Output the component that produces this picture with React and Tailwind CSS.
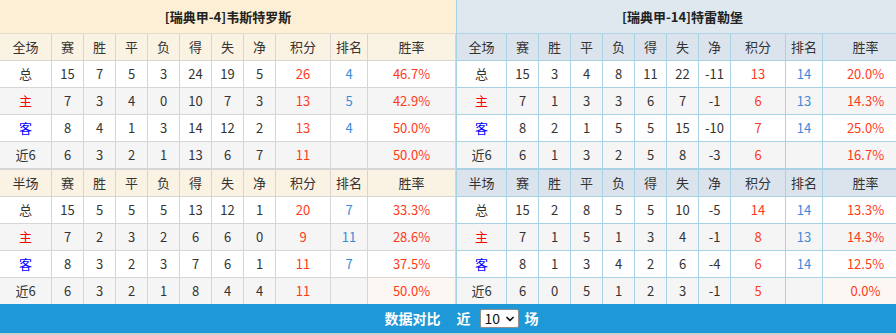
import { ChevronDown } from 'lucide-react';

const HEAD = ['赛', '胜', '平', '负', '得', '失', '净', '积分', '排名', '胜率'];

const home = {
  title: '[瑞典甲-4]韦斯特罗斯',
  full: [
    ['总', 15, 7, 5, 3, 24, 19, 5, 26, 4, '46.7%'],
    ['主', 7, 3, 4, 0, 10, 7, 3, 13, 5, '42.9%'],
    ['客', 8, 4, 1, 3, 14, 12, 2, 13, 4, '50.0%'],
    ['近6', 6, 3, 2, 1, 13, 6, 7, 11, '', '50.0%'],
  ],
  half: [
    ['总', 15, 5, 5, 5, 13, 12, 1, 20, 7, '33.3%'],
    ['主', 7, 2, 3, 2, 6, 6, 0, 9, 11, '28.6%'],
    ['客', 8, 3, 2, 3, 7, 6, 1, 11, 7, '37.5%'],
    ['近6', 6, 3, 2, 1, 8, 4, 4, 11, '', '50.0%'],
  ],
};

const away = {
  title: '[瑞典甲-14]特雷勒堡',
  full: [
    ['总', 15, 3, 4, 8, 11, 22, -11, 13, 14, '20.0%'],
    ['主', 7, 1, 3, 3, 6, 7, -1, 6, 13, '14.3%'],
    ['客', 8, 2, 1, 5, 5, 15, -10, 7, 14, '25.0%'],
    ['近6', 6, 1, 3, 2, 5, 8, -3, 6, '', '16.7%'],
  ],
  half: [
    ['总', 15, 2, 8, 5, 5, 10, -5, 14, 14, '13.3%'],
    ['主', 7, 1, 5, 1, 3, 4, -1, 8, 13, '14.3%'],
    ['客', 8, 1, 3, 4, 2, 6, -4, 6, 14, '12.5%'],
    ['近6', 6, 0, 5, 1, 2, 3, -1, 5, '', '0.0%'],
  ],
};

const themes = {
  left: {
    wrap: 'w-[456px]',
    grid: 'grid-cols-[52px_32px_32px_32px_32px_32px_32px_32px_55px_37px_88px]',
    title: 'bg-[#fcefd6] border-[#e3dccd]',
    head: 'bg-[#faf2e2]',
    line: 'border-[#d6d6d6]',
  },
  right: {
    wrap: 'w-[452px] border-l border-[#a9d3e5]',
    grid: 'grid-cols-[50px_32px_32px_32px_32px_32px_32px_32px_55px_37px_85px]',
    title: 'bg-[#dfe8ef] border-[#b3d4e6]',
    head: 'bg-[#dbe4ed]',
    line: 'border-[#a9d3e5]',
  },
};

function labelColor(l) {
  if (l === '主') return 'text-[#ff0000]';
  if (l === '客') return 'text-[#0000ff]';
  return 'text-[#333]';
}

function Cell({ children, cls }) {
  return <div className={`flex items-center justify-center border-r ${cls}`}>{children}</div>;
}

function Block({ t, label, rows, last, side }) {
  return (
    <>
      {[label, ...HEAD].map((h, i) => (
        <Cell key={h} cls={`${t.head} ${t.line} border-b ${label === '半场' ? 'border-t h-[28px]' : 'h-[27px]'} ${side === 'right' && i === 10 ? 'border-r-0' : ''}`}>
          {h}
        </Cell>
      ))}
      {rows.map((r, ri) => {
        const bg = ri % 2 ? 'bg-[#f5f5f5]' : 'bg-white';
        const isLast = last && ri === rows.length - 1;
        const h = isLast ? 'h-[26px]' : 'h-[27px] border-b';
        return r.map((v, ci) => {
          let color = 'text-[#333]';
          if (ci === 0) color = labelColor(v);
          if (ci === 8 || ci === 10) color = 'text-[#ff3a1a]';
          if (ci === 9) color = 'text-[#3b8bd9]';
          const cellBg = isLast && ci === 10 ? 'bg-[#fdf7f4]' : bg;
          return (
            <Cell key={ri + '-' + ci} cls={`${cellBg} ${t.line} ${h} ${color} ${side === 'right' && ci === 10 ? 'border-r-0' : ''}`}>
              {v}
            </Cell>
          );
        });
      })}
    </>
  );
}

function TeamTable({ data, side }) {
  const t = themes[side];
  return (
    <div className={`shrink-0 ${t.wrap}`}>
      <div className={`h-[34px] flex items-center justify-center border-b font-bold text-[#222] ${t.title}`}>
        {data.title}
      </div>
      <div className={`grid ${t.grid}`}>
        <Block t={t} label="全场" rows={data.full} side={side} />
        <Block t={t} label="半场" rows={data.half} last side={side} />
      </div>
    </div>
  );
}

export default function App() {
  return (
    <div className="w-full overflow-hidden bg-white">
      <div className="w-[908px] text-[13px] text-[#333]" style={{ fontFamily: '"Noto Sans CJK SC", "Noto Sans", sans-serif' }}>
        <div className="flex">
          <TeamTable data={home} side="left" />
          <TeamTable data={away} side="right" />
        </div>
        <div className="h-[31px] bg-[#1e98d6] border-b-2 border-[#cfcfcf] flex items-center justify-center pl-[15px] text-white text-[14px] font-bold">
          <span>数据对比</span>
          <span className="ml-[16px]">近</span>
          <div className="ml-[9px] w-[39px] h-[19px] bg-white border border-[#8f8f8f] rounded-[2px] flex items-center justify-between pl-[4px] pr-[2px] text-[#111] font-normal text-[14px]">
            <span>10</span>
            <ChevronDown size={12} strokeWidth={3.5} />
          </div>
          <span className="ml-[6px]">场</span>
        </div>
      </div>
    </div>
  );
}
